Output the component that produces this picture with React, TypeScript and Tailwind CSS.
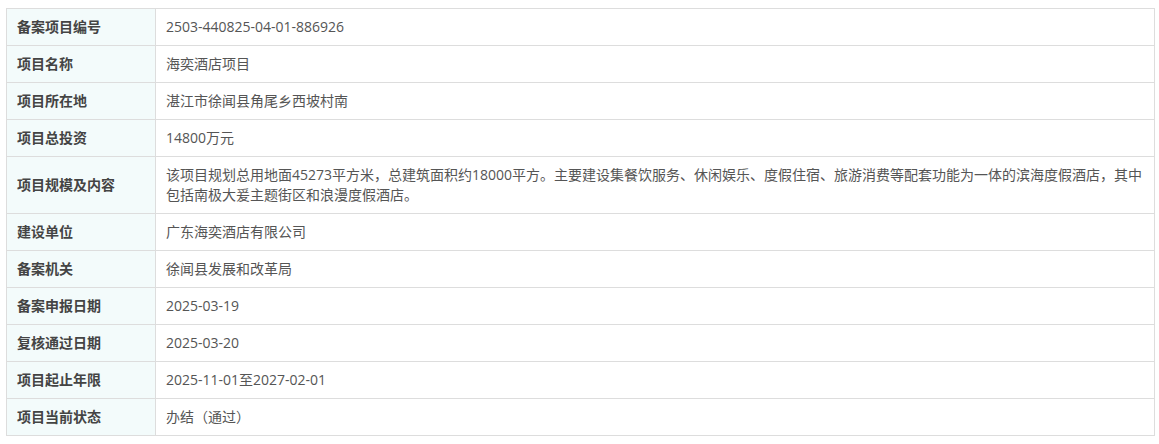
import React from "react";

const rows: [string, string][] = [
  ["备案项目编号", "2503-440825-04-01-886926"],
  ["项目名称", "海奕酒店项目"],
  ["项目所在地", "湛江市徐闻县角尾乡西坡村南"],
  ["项目总投资", "14800万元"],
  [
    "项目规模及内容",
    "该项目规划总用地面45273平方米，总建筑面积约18000平方。主要建设集餐饮服务、休闲娱乐、度假住宿、旅游消费等配套功能为一体的滨海度假酒店，其中包括南极大爰主题街区和浪漫度假酒店。",
  ],
  ["建设单位", "广东海奕酒店有限公司"],
  ["备案机关", "徐闻县发展和改革局"],
  ["备案申报日期", "2025-03-19"],
  ["复核通过日期", "2025-03-20"],
  ["项目起止年限", "2025-11-01至2027-02-01"],
  ["项目当前状态", "办结（通过）"],
];

export default function App() {
  return (
    <div
      className="bg-white w-[1159px] h-[444px] pt-2 pl-[6px]"
      style={{ fontFamily: '"Open Sans", "Noto Sans CJK SC", sans-serif' }}
    >
      <table className="table-fixed border-collapse w-[1149px] text-[14px] leading-[20px]">
        <colgroup>
          <col className="w-[149px]" />
          <col />
        </colgroup>
        <tbody>
          {rows.map(([k, v]) => (
            <tr key={k}>
              <td className="border border-[#dddddd] bg-[#f3fbfb] px-[10px] py-2 font-bold text-[#444444] align-middle">
                {k}
              </td>
              <td className="border border-[#dddddd] px-[10px] py-2 text-[#555555] align-middle">
                {v}
              </td>
            </tr>
          ))}
        </tbody>
      </table>
    </div>
  );
}
